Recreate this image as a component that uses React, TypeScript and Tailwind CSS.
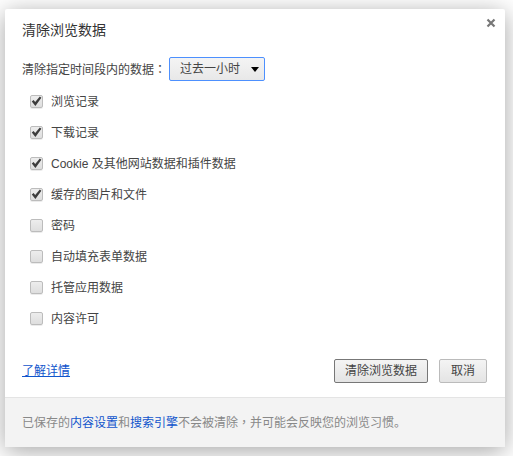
const items = [
  { label: "浏览记录", checked: true },
  { label: "下载记录", checked: true },
  { label: "Cookie 及其他网站数据和插件数据", checked: true },
  { label: "缓存的图片和文件", checked: true },
  { label: "密码", checked: false },
  { label: "自动填充表单数据", checked: false },
  { label: "托管应用数据", checked: false },
  { label: "内容许可", checked: false },
]

function CheckRow({ label, checked }: { label: string; checked: boolean }) {
  return (
    <div className="flex h-[31px] items-center gap-2">
      <span className="flex h-[13px] w-[13px] items-center justify-center rounded-[2px] border border-[#bcbcbc] bg-gradient-to-b from-[#ededed] to-[#dedede] shadow-[0_1px_0_rgba(0,0,0,0.08)]">
        {checked && (
          <svg width="11" height="11" viewBox="0 0 11 11" className="text-[#3c3c3c]">
            <path d="M0.8 5.6 L2.6 4 L4.2 6 L8.8 0.6 L10.4 1.8 L4.4 10 Z" fill="currentColor" />
          </svg>
        )}
      </span>
      <span className="text-xs text-[#444]">{label}</span>
    </div>
  )
}

export default function App() {
  return (
    <div className="h-[456px] w-[513px] overflow-hidden bg-white pl-[5px] pt-[9px] font-['Liberation_Sans','Noto_Sans_CJK_SC',sans-serif]">
      <div className="relative flex h-[438px] w-[500px] flex-col rounded-[2px] bg-white shadow-[0_4px_24px_rgba(0,0,0,0.36)]">
        <button className="absolute right-[9px] top-[9px] text-[#777]">
          <svg width="10" height="10" viewBox="0 0 10 10" className="block">
            <path d="M1.5 1.5 L8.5 8.5 M8.5 1.5 L1.5 8.5" stroke="currentColor" strokeWidth="2.2" />
          </svg>
        </button>
        <div className="flex-1 pl-[17px] pr-[18px] pt-[12px]">
          <h1 className="text-sm leading-[18px] text-[#333]">清除浏览数据</h1>
          <div className="mt-[18px] flex items-center gap-[3px]">
            <span className="text-xs text-[#444]">
              清除指定时间段内的数据<span className="font-['Noto_Sans_CJK_TC']">：</span>
            </span>
            <div className="flex h-[24px] w-[96px] items-center justify-between rounded-[2px] border border-[#4d90fe] bg-gradient-to-b from-[#f4f4f4] to-[#e8e8e8] pl-[10px] pr-[5px]">
              <span className="text-xs text-[#444]">过去一小时</span>
              <span className="h-0 w-0 border-x-[4.5px] border-t-[5px] border-x-transparent border-t-black" />
            </div>
          </div>
          <div className="mt-[5px] pl-[8px]">
            {items.map((item) => (
              <CheckRow key={item.label} label={item.label} checked={item.checked} />
            ))}
          </div>
          <div className="mt-[25px] flex items-center justify-between">
            <a className="text-xs text-[#15c] underline">了解详情</a>
            <div className="flex gap-[11px]">
              <button className="h-[24px] w-[94px] rounded-[2px] border border-[#777] bg-gradient-to-b from-[#f4f4f4] to-[#e4e4e4] text-xs text-[#444]">
                清除浏览数据
              </button>
              <button className="h-[24px] w-[48px] rounded-[2px] border border-[#bbb] bg-gradient-to-b from-[#f4f4f4] to-[#e4e4e4] text-xs text-[#444]">
                取消
              </button>
            </div>
          </div>
        </div>
        <div className="flex h-[50px] items-center border-t border-[#e4e4e4] bg-[#f3f3f3] pl-[17px] text-xs text-[#888]">
          <span>已保存的</span>
          <a className="text-[#15c]">内容设置</a>
          <span>和</span>
          <a className="text-[#15c]">搜索引擎</a>
          <span>
            不会被清除<span className="font-['Noto_Sans_CJK_TC']">，</span>并可能会反映您的浏览习惯。
          </span>
        </div>
      </div>
    </div>
  )
}
